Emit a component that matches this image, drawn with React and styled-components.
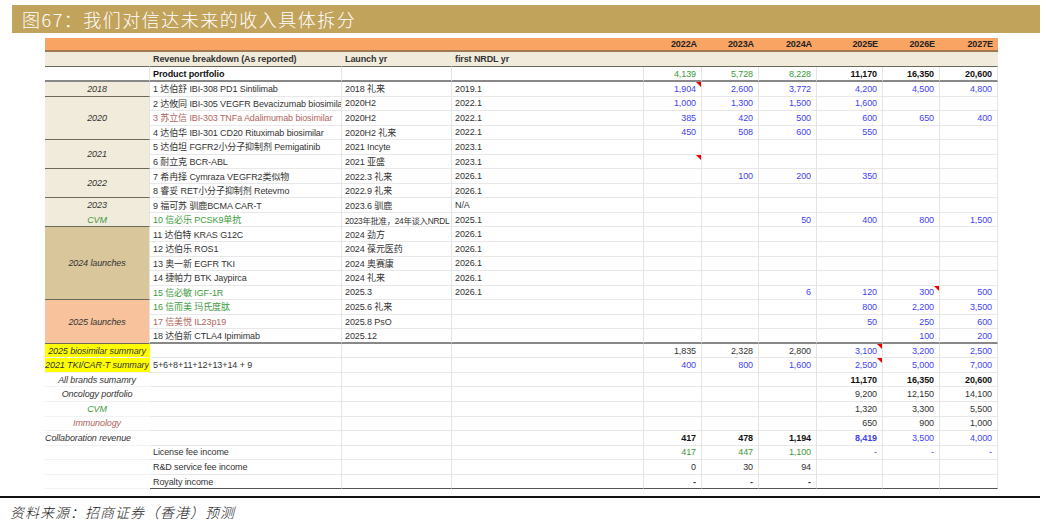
import React from 'react';
import styled, { createGlobalStyle } from 'styled-components';

const Global = createGlobalStyle`
  body { margin: 0; background: #fff; font-family: "Liberation Sans", Arial, "Noto Sans CJK SC", sans-serif; }
`;

const C = {
  blue: '#3f3ff5',
  green: '#3c9a3c',
  immuno: '#b0645e',
  dark: '#333',
  black: '#111',
};

const Page = styled.div`
  width: 1048px;
  height: 526px;
  padding: 5px 8px 0 12px;
  box-sizing: border-box;
  display: flex;
  flex-direction: column;
`;

const TitleBar = styled.div`
  height: 28px;
  background: #c2a35c;
  color: #fff;
  font-family: "Noto Sans CJK SC", sans-serif;
  font-weight: 300;
  font-size: 18px;
  display: flex;
  align-items: center;
  padding-left: 10px;
  letter-spacing: 1.5px;
`;

const Table = styled.div`
  margin: 5px 0 0 33px;
  display: grid;
  grid-template-columns: 105px 192px 110px 192px 58px 57px 58px 66px 57px 58px;
  grid-template-rows: 14px 15px 15px;
  grid-auto-rows: 14.55px;
  font-size: 9px;
  letter-spacing: -0.1px;
  color: ${C.dark};
`;

const Cell = styled.div`
  position: relative;
  display: flex;
  align-items: center;
  justify-content: ${p => (p.$align === 'right' ? 'flex-end' : p.$align === 'center' ? 'center' : 'flex-start')};
  padding: ${p => (p.$align === 'right' ? '0 5px 0 0' : p.$align === 'center' ? '0' : '0 0 0 3px')};
  grid-row: ${p => (p.$rows ? `span ${p.$rows}` : 'auto')};
  grid-column: ${p => (p.$cols ? `span ${p.$cols}` : 'auto')};
  background: ${p => p.$bg || 'transparent'};
  color: ${p => p.$color || C.dark};
  font-weight: ${p => (p.$bold ? 700 : 400)};
  font-style: ${p => (p.$italic ? 'italic' : 'normal')};
  border-right: 1px solid ${p => p.$noRight ? 'transparent' : '#e4e4e4'};
  border-bottom: ${p => p.$bottom || '1px solid #e8e8e8'};
  box-sizing: border-box;
  white-space: nowrap;
  overflow: hidden;
`;

const HeadCell = styled(Cell)`
  background: #f9a463;
  font-weight: 700;
  color: #222;
  border-right: none;
  border-bottom: 2px solid #a07a55;
`;

const Flag = styled.span`
  position: absolute;
  top: 0;
  right: 0;
  width: 0;
  height: 0;
  border-top: 5px solid #e00;
  border-left: 5px solid transparent;
`;

const Footer = styled.div`
  margin-top: 7px;
  border-top: 2px solid #111;
  margin-left: -12px;
  padding: 4px 0 0 10px;
  font-family: "Noto Sans CJK SC", sans-serif;
  font-weight: 300;
  font-style: italic;
  font-size: 14px;
  letter-spacing: 1px;
  color: #222;
`;

const beige = '#f1ebdb';
const groupLine = '1.5px solid #6b6b5a';

const rows = [
  { g: '2018', gs: 1, d: '1 达伯舒 IBI-308 PD1 Sintilimab', l: '2018 礼来', n: '2019.1', v: ['1,904', '2,600', '3,772', '4,200', '4,500', '4,800'], flag: [0] },
  { g: '2020', gs: 3, d: '2 达攸同 IBI-305 VEGFR Bevacizumab biosimilar', l: '2020H2', n: '2022.1', v: ['1,000', '1,300', '1,500', '1,600'] },
  { d: '3 苏立信 IBI-303 TNFa Adalimumab biosimilar', dc: C.immuno, l: '2020H2', n: '2022.1', v: ['385', '420', '500', '600', '650', '400'] },
  { d: '4 达伯华 IBI-301 CD20 Rituximab biosimilar', l: '2020H2 礼来', n: '2022.1', v: ['450', '508', '600', '550'] },
  { g: '2021', gs: 2, d: '5 达伯坦 FGFR2小分子抑制剂 Pemigatinib', l: '2021 Incyte', n: '2023.1' },
  { d: '6 耐立克 BCR-ABL', l: '2021 亚盛', n: '2023.1', flag: [0] },
  { g: '2022', gs: 2, d: '7 希冉择 Cymraza VEGFR2类似物', l: '2022.3 礼来', n: '2026.1', v: ['', '100', '200', '350'] },
  { d: '8 睿妥 RET小分子抑制剂 Retevmo', l: '2022.9 礼来', n: '2026.1' },
  { g: '2023', gs: 1, gNoLine: true, d: '9 福可苏 驯鹿BCMA CAR-T', l: '2023.6 驯鹿', n: 'N/A' },
  { g: 'CVM', gc: C.green, gs: 1, d: '10 信必乐 PCSK9单抗', dc: C.green, l: '2023年批准，24年谈入NRDL', lSmall: true, n: '2025.1', v: ['', '', '50', '400', '800', '1,500'] },
  { g: '2024 launches', gs: 5, gbg: '#d9c69b', d: '11 达伯特 KRAS G12C', l: '2024 劲方', n: '2026.1' },
  { d: '12 达伯乐 ROS1', l: '2024 葆元医药', n: '2026.1' },
  { d: '13 奥一新 EGFR TKI', l: '2024 奥赛康', n: '2026.1' },
  { d: '14 捷帕力 BTK Jaypirca', l: '2024 礼来', n: '2026.1' },
  { d: '15 信必敏 IGF-1R', dc: C.green, l: '2025.3', n: '2026.1', v: ['', '', '6', '120', '300', '500'], flag: [4] },
  { g: '2025 launches', gs: 3, gbg: '#f8c39c', d: '16 信而美 玛氏度肽', dc: C.green, l: '2025.6 礼来', v: ['', '', '', '800', '2,200', '3,500'] },
  { d: '17 信美悦 IL23p19', dc: C.immuno, l: '2025.8 PsO', v: ['', '', '', '50', '250', '600'] },
  { d: '18 达伯新 CTLA4 Ipimimab', l: '2025.12', v: ['', '', '', '', '100', '200'], last: true },
];

const B = C.blue;
const summary = [
  { g: '2025 biosimilar summary', gbg: '#ffff00', v: ['1,835', '2,328', '2,800', '3,100', '3,200', '2,500'], vc: [C.dark, C.dark, C.dark, B, B, B], flag: [3] },
  { g: '2021 TKI/CAR-T summary', gbg: '#ffff00', d: '5+6+8+11+12+13+14 + 9', v: ['400', '800', '1,600', '2,500', '5,000', '7,000'], vc: [B, B, B, B, B, B], flag: [3] },
  { g: 'All brands sumamry', v: ['', '', '', '11,170', '16,350', '20,600'], bold: [3, 4, 5], vc: Array(6).fill(C.black) },
  { g: 'Oncology portfolio', v: ['', '', '', '9,200', '12,150', '14,100'] },
  { g: 'CVM', gc: C.green, v: ['', '', '', '1,320', '3,300', '5,500'] },
  { g: 'Immunology', gc: C.immuno, v: ['', '', '', '650', '900', '1,000'] },
  { g: 'Collaboration revenue', gLeft: true, v: ['417', '478', '1,194', '8,419', '3,500', '4,000'], vc: [C.black, C.black, C.black, B, B, B], bold: [0, 1, 2, 3] },
  { d: 'License fee income', v: ['417', '447', '1,100', '-', '-', '-'], vc: [C.green, C.green, C.green, B, B, B] },
  { d: 'R&D service fee income', v: ['0', '30', '94'] },
  { d: 'Royalty income', v: ['-', '-', '-'], bold: [0, 1, 2], end: true },
];

const years = ['2022A', '2023A', '2024A', '2025E', '2026E', '2027E'];

const SmallText = styled.span`
  font-size: 8.4px;
  letter-spacing: -0.3px;
`;

function Values({ r, bottom }) {
  return [0, 1, 2, 3, 4, 5].map(i => {
    const val = (r.v && r.v[i]) || '';
    const color = r.vc ? r.vc[i] : B;
    return (
      <Cell key={i} $align="right" $color={color} $bold={r.bold && r.bold.includes(i)} $bottom={bottom}>
        {val}
        {r.flag && r.flag.includes(i) && <Flag />}
      </Cell>
    );
  });
}

export default function App() {
  return (
    <>
      <Global />
      <Page>
        <TitleBar>图67：我们对信达未来的收入具体拆分</TitleBar>
        <Table>
          <HeadCell $cols={4} />
          {years.map(y => (
            <HeadCell key={y} $align="right">{y}</HeadCell>
          ))}

          <Cell $bg={beige} $bottom={groupLine} $noRight />
          <Cell $bg={beige} $bold $bottom={groupLine} $noRight>Revenue breakdown (As reported)</Cell>
          <Cell $bg={beige} $bold $bottom={groupLine} $noRight>Launch yr</Cell>
          <Cell $bg={beige} $bold $bottom={groupLine} $cols={7} $noRight>first NRDL yr</Cell>

          <Cell $bottom="2px solid #888" />
          <Cell $bold $color={C.black} $bottom="2px solid #888">Product portfolio</Cell>
          <Cell $bottom="2px solid #888" />
          <Cell $bottom="2px solid #888" />
          <Values
            bottom="2px solid #888"
            r={{ v: ['4,139', '5,728', '8,228', '11,170', '16,350', '20,600'], vc: [C.green, C.green, C.green, C.black, C.black, C.black], bold: [3, 4, 5] }}
          />

          {rows.map((r, idx) => {
            const bottom = r.last ? '2px solid #888' : undefined;
            return (
              <React.Fragment key={idx}>
                {r.g && (
                  <Cell
                    $rows={r.gs}
                    $align="center"
                    $italic
                    $bg={r.gbg || beige}
                    $color={r.gc || C.dark}
                    $bottom={r.gNoLine ? '1px solid transparent' : groupLine}
                  >
                    {r.g}
                  </Cell>
                )}
                <Cell $color={r.dc || C.dark} $bottom={bottom}>{r.d}</Cell>
                <Cell $bottom={bottom}>{r.lSmall ? <SmallText>{r.l}</SmallText> : r.l}</Cell>
                <Cell $bottom={bottom}>{r.n || ''}</Cell>
                <Values r={r} bottom={bottom} />
              </React.Fragment>
            );
          })}

          {summary.map((s, idx) => {
            const bottom = s.end ? '1.5px solid #555' : undefined;
            return (
              <React.Fragment key={idx}>
                <Cell
                  $align={s.gLeft ? 'left' : 'center'}
                  $italic
                  $bg={s.gbg}
                  $color={s.gc || C.dark}
                  $bottom="1px solid #f2f2f2"
                  $noRight
                  style={s.gLeft ? { paddingLeft: 0 } : undefined}
                >
                  {s.g || ''}
                </Cell>
                <Cell $bottom={bottom}>{s.d || ''}</Cell>
                <Cell $bottom={bottom} />
                <Cell $bottom={bottom} />
                <Values r={{ ...s, vc: s.vc || Array(6).fill(C.dark) }} bottom={bottom} />
              </React.Fragment>
            );
          })}
        </Table>
        <Footer>资料来源：招商证券（香港）预测</Footer>
      </Page>
    </>
  );
}
